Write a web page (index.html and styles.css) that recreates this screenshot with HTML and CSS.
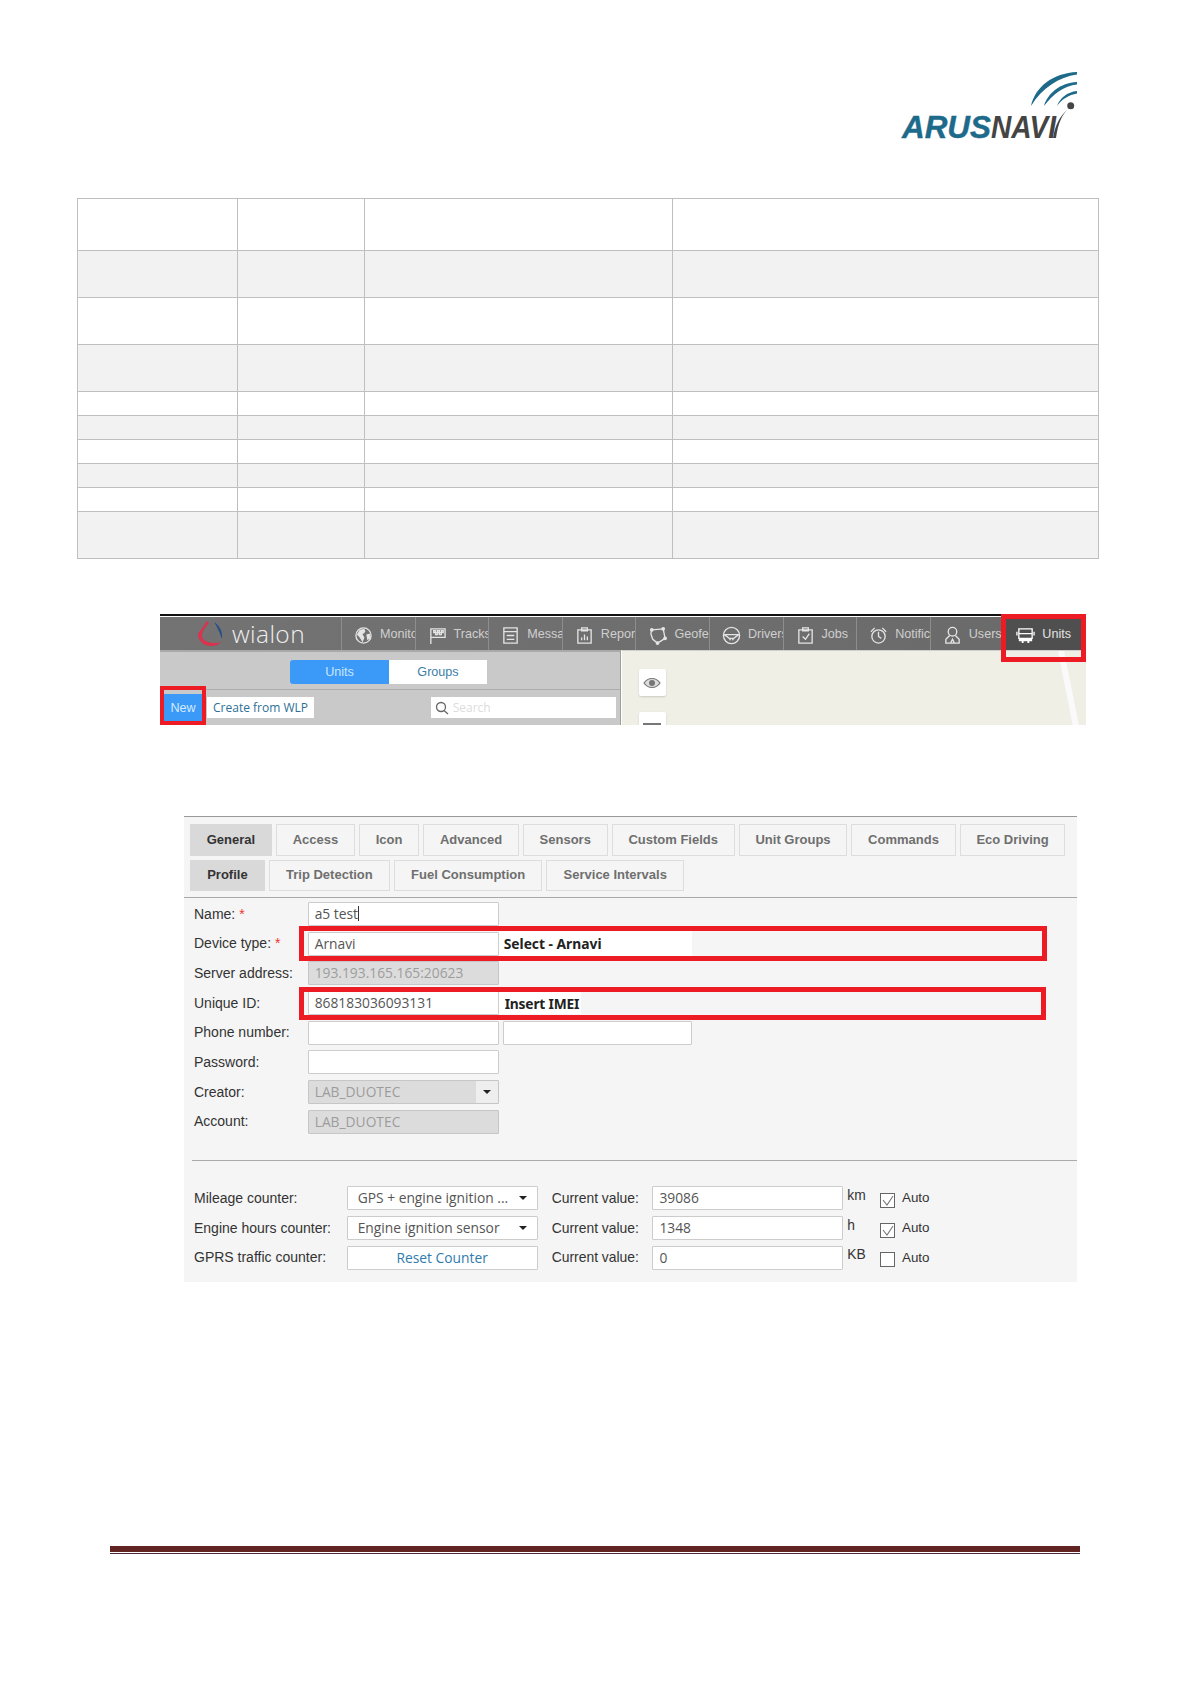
FILE: index.html
```html
<!DOCTYPE html>
<html lang="en">
<head>
<meta charset="utf-8">
<title>Arusnavi - Wialon setup</title>
<link rel="stylesheet" href="styles.css">
</head>
<body>
<div class="page">
  <header class="head">
    <svg class="logo" width="190" height="80" viewBox="0 0 190 80">
      <path class="teal" d="M136 41C140 22 158 8 182 7L182 9.500C164 12 147 23 136 41Z"/>
      <path class="teal" d="M149 41C153 28 165 18 182 17L182 19.500C169 21 158 29 149 41Z"/>
      <path class="teal" d="M162 41C165 33 172 27 182 26L182 28.500C174 30 167 34 162 41Z"/>
      <circle class="grey" cx="175.700" cy="40.700" r="3.500"/>
      <path class="grey" d="M173 44C167 50 163 58 161 73L158 73C160 60 165 51 173 44Z"/>
      <text class="logo-a" x="7" y="73" textLength="89" lengthAdjust="spacingAndGlyphs">ARUS</text>
      <text class="logo-b" x="96" y="73" textLength="65" lengthAdjust="spacingAndGlyphs">NAVI</text>
    </svg>
  </header>

  <table class="spec">
    <colgroup><col class="c1"><col class="c2"><col class="c3"><col class="c4"></colgroup>
    <tr class="r-head"><td></td><td></td><td></td><td></td></tr>
    <tr class="r-tall"><td></td><td></td><td></td><td></td></tr>
    <tr class="r-tall"><td></td><td></td><td></td><td></td></tr>
    <tr class="r-tall"><td></td><td></td><td></td><td></td></tr>
    <tr class="r-low"><td></td><td></td><td></td><td></td></tr>
    <tr class="r-low"><td></td><td></td><td></td><td></td></tr>
    <tr class="r-low"><td></td><td></td><td></td><td></td></tr>
    <tr class="r-low"><td></td><td></td><td></td><td></td></tr>
    <tr class="r-low"><td></td><td></td><td></td><td></td></tr>
    <tr class="r-tall"><td></td><td></td><td></td><td></td></tr>
  </table>

  <section class="shot">
    <nav class="bar">
      <div class="brand">
        <svg width="28" height="28" viewBox="0 0 28 28">
          <path class="b-red" d="M10 1L1 14C1 20 6 26 14 26C18 26 21 25 24 22C18 24 10 23 6 19C4 15 5 11 12 3Z"/>
          <path class="b-blue" d="M17 2C23 6 26 12 25 19C23 14 21 8 17 2Z"/>
        </svg>
        <span class="brand-name">wialon</span>
      </div>
      <a class="item">
        <svg class="ico" viewBox="0 0 20 20"><circle cx="10" cy="10" r="8"/><path class="fill" d="M6 4L11 3L12 6L9 9L11 12L9 17L6 12L3 9ZM13 9L17 8L17 13L14 15Z"/></svg>
        <span>Monitoring</span>
      </a>
      <a class="item">
        <svg class="ico" viewBox="0 0 20 20"><path d="M3 19V3H18V12H3"/><path d="M6 5H8V7H6ZM10 5H12V7H10ZM14 5H16V7H14ZM8 7H10V9H8ZM12 7H14V9H12Z"/></svg>
        <span>Tracks</span>
      </a>
      <a class="item">
        <svg class="ico" viewBox="0 0 20 20"><path d="M3 2H17V18H3ZM3 6H17M6 10H14M6 14H14"/></svg>
        <span>Messages</span>
      </a>
      <a class="item">
        <svg class="ico" viewBox="0 0 20 20"><path d="M3 4H17V18H3ZM7 2H13V5H7ZM7 15V12M10 15V9M13 15V11"/></svg>
        <span>Reports</span>
      </a>
      <a class="item">
        <svg class="ico" viewBox="0 0 20 20"><path d="M4 4L16 3L18 13L10 18L5 14L3 8Z"/><circle class="fill" cx="4" cy="4" r="2"/><circle class="fill" cx="16" cy="3" r="2"/><circle class="fill" cx="18" cy="13" r="2"/><circle class="fill" cx="10" cy="18" r="2"/></svg>
        <span>Geofences</span>
      </a>
      <a class="item">
        <svg class="ico" viewBox="0 0 20 20"><circle cx="10" cy="10" r="8.500"/><path d="M2 9H18M2 9C6 12 8 12 9 15M18 9C14 12 12 12 11 15M7 13H13"/></svg>
        <span>Drivers</span>
      </a>
      <a class="item">
        <svg class="ico" viewBox="0 0 20 20"><path d="M3 4H17V18H3ZM7 2H13V5H7ZM7 11L10 14L14 8"/></svg>
        <span>Jobs</span>
      </a>
      <a class="item">
        <svg class="ico" viewBox="0 0 20 20"><circle cx="10" cy="11" r="7"/><path d="M10 6V11L13 13M2 6L6 2M18 6L14 2"/></svg>
        <span>Notifications</span>
      </a>
      <a class="item">
        <svg class="ico" viewBox="0 0 20 20"><circle cx="10" cy="6" r="4.500"/><path d="M7 10L3 14V18H17V14L13 10M8 18L10 14L12 18"/></svg>
        <span>Users</span>
      </a>
      <a class="item item-on">
        <svg class="ico ico-on" viewBox="0 0 20 20"><path d="M3 3H17V13H3ZM3 8H17M1 6V10M19 6V10"/><path class="fill" d="M3 13H17V16H14V18H12V16H8V18H6V16H3Z"/></svg>
        <span>Units</span>
      </a>
    </nav>
    <div class="work">
      <div class="side">
        <div class="side-top">
          <div class="toggle"><span class="tg tg-on">Units</span><span class="tg">Groups</span></div>
        </div>
        <div class="side-tools">
          <span class="new">New</span>
          <span class="wlp">Create from WLP</span>
          <span class="search">
            <svg class="lens" width="14" height="14" viewBox="0 0 14 14"><circle cx="6" cy="6" r="4.500"/><path d="M9 9.500L13 13"/></svg>
            Search
          </span>
        </div>
      </div>
      <div class="map">
        <svg class="road" width="40" height="75" viewBox="0 0 40 75"><path d="M20 0L35 75"/></svg>
        <div class="map-btn">
          <svg width="18" height="12" viewBox="0 0 18 12"><path class="eye" d="M1 6C5 0 13 0 17 6C13 12 5 12 1 6Z"/><circle class="pupil" cx="9" cy="6" r="3"/></svg>
        </div>
        <div class="map-btn map-btn-cut"><span class="stub"></span></div>
      </div>
    </div>
    <div class="frame frame-units"></div>
    <div class="frame frame-new"></div>
  </section>

  <section class="form">
    <div class="tabs tabs-1">
      <span class="tab tab-on">General</span>
      <span class="tab">Access</span>
      <span class="tab">Icon</span>
      <span class="tab">Advanced</span>
      <span class="tab">Sensors</span>
      <span class="tab">Custom Fields</span>
      <span class="tab">Unit Groups</span>
      <span class="tab">Commands</span>
      <span class="tab">Eco Driving</span>
    </div>
    <div class="tabs tabs-2">
      <span class="tab tab-on">Profile</span>
      <span class="tab">Trip Detection</span>
      <span class="tab">Fuel Consumption</span>
      <span class="tab">Service Intervals</span>
    </div>
    <div class="fields">
      <label class="lbl">Name: <i>*</i></label><div class="inp">a5 test<span class="caret"></span></div><div></div>
      <label class="lbl">Device type: <i>*</i></label><div class="inp">Arnavi</div><div class="note note-a">Select - Arnavi</div>
      <label class="lbl">Server address:</label><div class="inp off">193.193.165.165:20623</div><div></div>
      <label class="lbl">Unique ID:</label><div class="inp">868183036093131</div><div class="note note-b">Insert IMEI</div>
      <label class="lbl">Phone number:</label><div class="inp"></div><div class="inp inp-b"></div>
      <label class="lbl">Password:</label><div class="inp"></div><div></div>
      <label class="lbl">Creator:</label><div class="inp off sel"><span>LAB_DUOTEC</span><span class="arrow-box"><span class="arrow"></span></span></div><div></div>
      <label class="lbl">Account:</label><div class="inp off">LAB_DUOTEC</div><div></div>
    </div>
    <div class="divider"></div>
    <div class="counters">
      <label class="lbl">Mileage counter:</label>
      <div class="inp sel"><span>GPS + engine ignition ...</span><span class="arrow"></span></div>
      <label class="lbl cur">Current value:</label>
      <div class="inp">39086</div>
      <span class="lbl unit">km</span>
      <span class="chk"><svg width="13" height="13" viewBox="0 0 13 13"><path d="M2 6L6 11L12 2"/></svg></span>
      <span class="lbl auto">Auto</span>

      <label class="lbl">Engine hours counter:</label>
      <div class="inp sel"><span>Engine ignition sensor</span><span class="arrow"></span></div>
      <label class="lbl cur">Current value:</label>
      <div class="inp">1348</div>
      <span class="lbl unit">h</span>
      <span class="chk"><svg width="13" height="13" viewBox="0 0 13 13"><path d="M2 6L6 11L12 2"/></svg></span>
      <span class="lbl auto">Auto</span>

      <label class="lbl">GPRS traffic counter:</label>
      <div class="inp reset">Reset Counter</div>
      <label class="lbl cur">Current value:</label>
      <div class="inp">0</div>
      <span class="lbl unit">KB</span>
      <span class="chk"></span>
      <span class="lbl auto">Auto</span>
    </div>
    <div class="frame frame-device"></div>
    <div class="frame frame-imei"></div>
  </section>

  <footer class="rule"></footer>
</div>
</body>
</html>
```
FILE: styles.css
```css
* { box-sizing: border-box; }
html, body { margin: 0; padding: 0; background: #fff; }
.page { width: 1190px; height: 1684px; overflow: hidden; font-family: "Liberation Sans", Arial, sans-serif; }

/* header */
.head { height: 198px; padding: 65px 105px 0 0; display: flex; justify-content: flex-end; align-items: flex-start; }
.teal { fill: #1d6a8a; }
.grey { fill: #454545; }
.logo-a { font: italic 700 32px "Liberation Sans", sans-serif; fill: #1d6a8a; stroke: #1d6a8a; stroke-width: .4px; }
.logo-b { font: italic 700 32px "Liberation Sans", sans-serif; fill: #444; }

/* table */
.spec { margin-left: 77px; width: 1021px; table-layout: fixed; border-collapse: collapse; }
.spec td { border: 1px solid #bfbfbf; padding: 0; }
.spec tr:nth-child(even) td { background: #f2f2f2; }
.c1 { width: 160px; } .c2 { width: 127px; } .c3 { width: 308px; } .c4 { width: 426px; }
.r-head { height: 52px; } .r-tall { height: 47px; } .r-low { height: 24px; }

/* wialon screenshot */
.shot { position: relative; margin: 55px 0 0 160px; width: 926px; height: 111px; border-top: 2px solid #111; padding-top: 1px; font-size: 12.600px; }
.bar { display: flex; height: 33px; background: linear-gradient(90deg, #737373, #6a6a6a); color: #cfcfcf; }
.brand { width: 182px; flex: none; display: flex; align-items: center; padding-left: 37px; gap: 7px; border-right: 1px solid #8d8d8d; }
.brand-name { font: 300 24.500px/1 "Open Sans", sans-serif; color: #efefef; letter-spacing: .4px; margin-top: 1px; }
.b-red { fill: #d8334f; }
.b-blue { fill: #2a4f87; }
.item { width: 73.600px; flex: none; display: flex; align-items: center; padding-left: 12px; gap: 7px; overflow: hidden; white-space: nowrap; border-right: 1px solid #8d8d8d; }
.item span { flex: none; }
.ico { width: 19px; height: 19px; flex: none; fill: none; stroke: #e4e4e4; stroke-width: 1.400; margin-top: 3px; }
.ico .fill { fill: #e4e4e4; stroke: none; }
.ico-on { stroke: #fff; }
.ico-on .fill { fill: #fff; }
.item-on { flex: 1; width: auto; background: #4f4f4f; border-right: 0; padding-left: 12px; color: #e4e4e4; }
.work { display: flex; height: 75px; }
.side { width: 461px; flex: none; background: #c9c9c9; border-top: 2px solid #a9a9a9; border-right: 1px solid #9d9d9d; }
.side-top { height: 38px; display: flex; justify-content: center; align-items: center; padding: 3px 0 0 0; border-bottom: 1px solid #adadad; }
.toggle { display: flex; height: 24px; margin-left: -3px; }
.tg { width: 98px; display: flex; align-items: center; justify-content: center; background: #fff; color: #3d7ea6; }
.tg-on { width: 99px; background: #3b99f7; color: #c9e6ff; border-radius: 3px 0 0 3px; }
.side-tools { display: flex; align-items: center; height: 35px; padding-left: 4px; }
.new { width: 38px; height: 28px; display: flex; align-items: center; justify-content: center; background: #3b99f7; color: #d5ebff; flex: none; }
.wlp { margin-left: 5px; width: 107px; height: 21px; display: flex; align-items: center; justify-content: center; background: #fff; color: #2e6f96; font-family: "Open Sans", sans-serif; font-size: 12px; flex: none; }
.search { margin-left: 116.700px; width: 185px; height: 21px; display: flex; align-items: center; gap: 4px; padding-left: 4px; background: #fff; color: #dcdcdc; flex: none; font-family: "Open Sans", sans-serif; font-size: 12px; }
.lens { fill: none; stroke: #666; stroke-width: 1.300; }
.map { position: relative; flex: 1; background: #f0efe6; border-left: 1px solid #fff; border-top: 1px solid #cfcfcf; padding: 18px 0 0 16.500px; display: flex; flex-direction: column; gap: 16px; overflow: hidden; }
.road { position: absolute; right: 5px; top: 0; fill: none; stroke: #fafafa; stroke-width: 6; }
.map-btn { width: 27px; height: 27px; flex: none; background: #fff; border-radius: 2px; display: flex; align-items: center; justify-content: center; box-shadow: 0 1px 2px rgba(0,0,0,.15); }
.map-btn-cut { align-items: flex-start; padding-top: 11px; }
.stub { display: block; width: 18px; height: 3px; background: #777; }
.eye { fill: #ddd; stroke: #777; stroke-width: 1.200; }
.pupil { fill: #777; }

.frame { position: absolute; border: 5px solid #ed1c24; pointer-events: none; }
.frame-units { left: 841px; top: -2px; width: 85px; height: 48px; }
.frame-new { left: 0; top: 70px; width: 46px; height: 39px; border-width: 4px; }

/* unit properties form */
.form { position: relative; margin: 91px 0 0 184px; width: 893px; height: 466px; background: #f5f5f5; border-top: 1px solid #999; font-size: 14px; color: #333; }
.tabs { display: flex; gap: 4px; padding-left: 6px; }
.tabs-1 { height: 32px; margin-top: 7px; }
.tabs-2 { height: 31px; margin-top: 4px; }
.tab { display: flex; align-items: center; padding: 0 15.750px 2px; background: #f5f5f5; border: 1px solid #ddd; color: #6f6f6f; font-weight: 700; font-size: 13px; white-space: nowrap; }
.tabs-2 .tab { padding-left: 16.200px; padding-right: 16.200px; }
.tab-on { background: #d9d9d9; border-color: #d9d9d9; color: #333; }
.fields { margin-top: 6px; border-top: 1px solid #a8a8a8; padding: 4px 0 0 10px; display: grid; grid-template-columns: 113.700px 191px 193.300px; grid-auto-rows: 24px; row-gap: 5.700px; align-items: center; }
.lbl { font-size: 14px; color: #333; white-space: nowrap; margin-top: -1px; }
.lbl i { color: #e33; font-style: normal; }
.inp { height: 24px; display: flex; align-items: center; padding: 0 0 1px 6px; background: #fff; border: 1px solid #ccc; border-radius: 1px; font-family: "Open Sans", sans-serif; font-size: 13.800px; color: #555; white-space: nowrap; overflow: hidden; }
.off { background: #dcdcdc; border-color: #c6c6c6; color: #9c9c9c; }
.sel { justify-content: space-between; padding-left: 10px; padding-right: 10px; }
.fields .sel { padding-left: 6px; padding-right: 0; }
.arrow-box { width: 22px; height: 22px; background: #eee; display: flex; align-items: center; justify-content: center; }
.arrow { width: 0; height: 0; border: 4px solid transparent; border-top: 4px solid #222; border-bottom: 0; }
.caret { display: inline-block; width: 1px; height: 15px; background: #333; }
.inp-b { margin-left: 4px; }
.note { height: 25px; display: flex; align-items: center; padding-left: 5px; background: #fff; color: #222; font: 700 13.800px "Noto Sans", sans-serif; white-space: nowrap; }
.note-b { width: 82px; height: 22px; padding-left: 6px; letter-spacing: -.2px; }
.divider { margin: 26px 0 0 7.700px; border-top: 1px solid #aaa; height: 1px; }
.counters { margin-top: 25px; padding-left: 10px; display: grid; grid-template-columns: 152.700px 191px 114.700px 190.600px 37px 15px auto; grid-auto-rows: 24.700px; row-gap: 5.200px; align-items: center; }
.cur { padding-left: 14px; font-size: 13.900px; }
.unit { padding-left: 4.400px; margin-top: -6px; font-size: 13.800px; }
.auto { padding-left: 7px; font-size: 13.400px; }
.chk { width: 15px; height: 15px; border: 1px solid #666; background: #fff; margin-top: 4px; display: block; }
.chk svg { display: block; fill: none; stroke: #777; stroke-width: 1.100; }
.reset { justify-content: center; padding-left: 0; color: #2f7bad; }
.frame-device { left: 115px; top: 109px; width: 748px; height: 35px; }
.frame-imei { left: 115px; top: 170px; width: 747px; height: 32.500px; }

/* footer */
.rule { margin: 264px 0 0 110px; width: 970px; height: 8px; background: linear-gradient(#622423 0 6px, #fff 6px 7px, #4a2440 7px 8px); }
```
